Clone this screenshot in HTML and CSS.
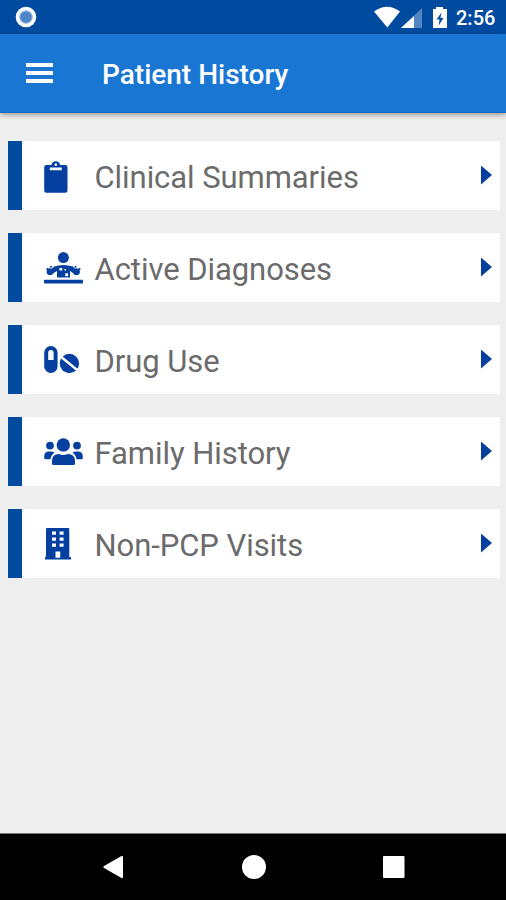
FILE: index.html
```html
<!DOCTYPE html>
<html lang="en">
<head>
<meta charset="utf-8">
<title>Patient History</title>
<link rel="stylesheet" href="styles.css">
</head>
<body>
<div class="screen">
  <div class="status">
    <svg class="record" width="22" height="22" viewBox="0 0 22 22"><circle cx="11" cy="11" r="10.3" fill="#fff"/><circle cx="11" cy="11" r="6.2" fill="#4b86c8" stroke="#93b6df" stroke-width="1.2"/></svg>
    <svg class="signals" width="76" height="24" viewBox="0 0 76 24">
      <path d="M0 6.500Q13 -3 26 6.500L13.300 22.500Z" fill="#fff"/>
      <path d="M48 3V23H27Z" fill="#5285c2"/><path d="M40 11V23H27Z" fill="#fff"/>
      <path d="M59 4h3V2h7V4h4v19H59Z" fill="#fff"/><path d="M67.500 7.500l-5 7h3l-.8 6 4.800-7.500h-3Z" fill="#004ba0"/>
    </svg>
    <span class="clock">2:56</span>
  </div>
  <header class="appbar">
    <div class="menu"><i></i><i></i><i></i></div>
    <h1>Patient History</h1>
  </header>
  <main class="list">
    <div class="card">
      <svg class="icon" viewBox="0 0 40 35"><path fill-rule="evenodd" d="M3.300 7H8.500A4.300 4.300 0 0 1 17 7H22.300Q24.500 7 24.500 9.200V32.500Q24.500 34.700 22.300 34.700H3.300Q1.200 34.700 1.200 32.500V9.200Q1.200 7 3.300 7ZM12.800 5.300a1.300 1.300 0 1 0 .01 0ZM6.800 9.600V12.200H18.700V9.600Z"/></svg>
      <span class="label">Clinical Summaries</span><i class="arrow"></i>
    </div>
    <div class="card">
      <svg class="icon" viewBox="0 0 40 35"><circle cx="20.400" cy="7.600" r="5.500"/><rect x="1" y="29.700" width="39" height="3.700" rx="1"/><path d="M11 16.500Q20.500 13.500 30 16.500L34 21L31.500 24L27 21V27.500H14V21L9 24L6.500 21Z"/><circle cx="7" cy="21.700" r="3.400"/><circle cx="33.500" cy="21.700" r="3.400"/><circle cx="8" cy="16.800" r="1"/><circle cx="32.500" cy="16.800" r="1"/><circle cx="4.300" cy="19" r="1.100"/><circle cx="36.500" cy="19" r="1.100"/><path class="cut" d="M16.500 18h2.800v2.500h-2.800zM22.300 23.300h2.800v3h-2.800zM21.500 19h1.500v1.500h-1.500z"/></svg>
      <span class="label">Active Diagnoses</span><i class="arrow"></i>
    </div>
    <div class="card">
      <svg class="icon" viewBox="0 0 40 35"><rect x="1.200" y="4" width="13.400" height="27" rx="6.700"/><path class="cut" d="M5.200 18V10.700a2.700 2.700 0 0 1 5.400 0V18Z"/><circle cx="26.400" cy="21.500" r="9.700"/><path class="slash" d="M17 14L36 29.500"/></svg>
      <span class="label">Drug Use</span><i class="arrow"></i>
    </div>
    <div class="card">
      <svg class="icon" viewBox="0 0 40 35"><circle cx="20.300" cy="10.900" r="6.700"/><circle cx="7" cy="11.600" r="3.900"/><circle cx="34" cy="11.600" r="3.900"/><path d="M9 31V27Q9 20 16 20Q20.300 22 24.600 20Q32 20 32 27V29.500Q32 31 30.500 31H10.500Q9 31 9 29.500ZM1.200 24V22.500Q1.200 17.500 6 17.500H8Q10 17.500 11.500 18.800Q8 21 7.500 25.300H2.500Q1.200 25.300 1.200 24ZM39.800 24V22.500Q39.800 17.500 35 17.500H33Q31 17.500 29.500 18.800Q33 21 33.500 25.300H38.500Q39.800 25.300 39.800 24Z"/></svg>
      <span class="label">Family History</span><i class="arrow"></i>
    </div>
    <div class="card">
      <svg class="icon" viewBox="0 0 40 35"><path fill-rule="evenodd" d="M4 2H25.200Q26.300 2 26.300 3.200V31H28V33.400H2V31H3V3.200Q3 2 4 2ZM9 5.600V8.800H13V5.600ZM16.600 5.600V8.800H20.600V5.600ZM9 11.500V14.800H13V11.500ZM16.600 11.500V14.800H20.600V11.500ZM9 17.600V20.800H13V17.600ZM16.600 17.600V20.800H20.600V17.600ZM12.500 25.500V31.800H17.200V25.500Z"/></svg>
      <span class="label">Non-PCP Visits</span><i class="arrow"></i>
    </div>
  </main>
  <nav class="navbar">
    <svg width="22" height="26" viewBox="0 0 22 26"><path d="M2 12L19.500 2Q21 1.500 21 3V23Q21 24.500 19.500 24L2 14Q.5 13 2 12Z"/></svg>
    <svg width="24" height="24" viewBox="0 0 24 24"><circle cx="12" cy="12" r="12"/></svg>
    <svg width="22" height="22" viewBox="0 0 22 22"><rect width="21.500" height="22" rx="1"/></svg>
  </nav>
</div>
</body>
</html>
```
FILE: styles.css
```css
* { box-sizing: border-box; }
body { margin: 0; background: #eee; font-family: Roboto, sans-serif; }
.screen { width: 506px; height: 900px; display: flex; flex-direction: column; overflow: hidden; }
.status { height: 34px; background: #004ba0; display: flex; align-items: center; padding-left: 15px; flex: none; }
.signals { margin-left: 337px; }
.clock { margin-left: 6px; color: #fff; font-size: 20px; font-weight: 500; line-height: 34px; padding-top: 2px; white-space: nowrap; }
.appbar { height: 79px; flex: none; background: #1976d2; border-bottom: 1px solid #1769bd; display: flex; align-items: center; padding-left: 26px; box-shadow: 0 2px 5px rgba(0, 0, 0, .35); }
.menu { width: 27px; display: flex; flex-direction: column; gap: 4px; }
.menu i { height: 3.800px; background: #fff; }
h1 { margin: 3px 0 0 49px; color: #fff; font-size: 28px; font-weight: 500; line-height: 36px; white-space: nowrap; }
.list { flex: 1; padding: 28px 6px 0 7.500px; display: flex; flex-direction: column; gap: 23px; }
.card { height: 69px; background: #fff; border-left: 14px solid #004ba0; display: flex; align-items: center; padding: 0 8px 0 21px; }
.icon { width: 40px; height: 35px; fill: #0540a0; flex: none; }
.cut { fill: #fff; }
.slash { stroke: #fff; stroke-width: 2.300; }
.label { margin: 4px 0 0 12px; flex: 1; color: #6b6b6b; font-size: 31px; letter-spacing: -.06px; line-height: 40px; white-space: nowrap; }
.arrow { width: 11px; height: 19px; background: #0540a0; clip-path: polygon(0 0, 100% 50%, 0 100%); margin-bottom: 1px; }
.navbar { height: 67px; flex: none; background: #000; border-top: 1px solid #777; display: flex; align-items: center; justify-content: space-between; padding: 0 101px 0 102px; }
.navbar svg { fill: #fff; }
```
